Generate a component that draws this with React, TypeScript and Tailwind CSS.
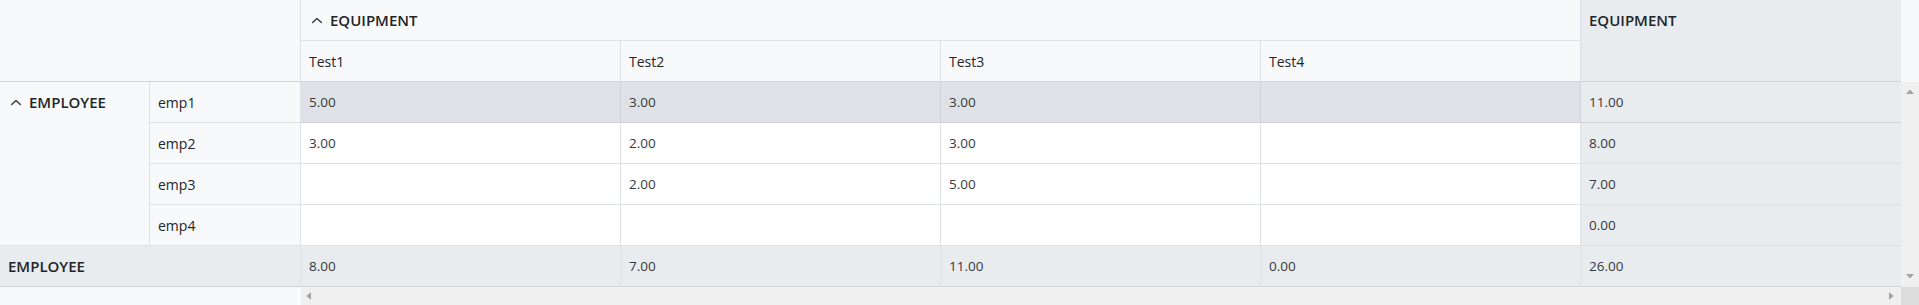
import React from "react";

const rows = [
  { name: "emp1", vals: ["5.00", "3.00", "3.00", ""], total: "11.00", hl: true },
  { name: "emp2", vals: ["3.00", "2.00", "3.00", ""], total: "8.00", hl: false },
  { name: "emp3", vals: ["", "2.00", "5.00", ""], total: "7.00", hl: false },
  { name: "emp4", vals: ["", "", "", ""], total: "0.00", hl: false },
];

const rowStart = ["row-start-3", "row-start-4", "row-start-5", "row-start-6"];
const colStart = ["col-start-3", "col-start-4", "col-start-5", "col-start-6"];

function Chevron() {
  return (
    <svg width="16" height="16" viewBox="0 0 16 16" className="shrink-0">
      <path d="M3.6 10.6 L8 6.4 L12.4 10.6" fill="none" stroke="#343a40" strokeWidth="1.4" strokeLinecap="round" strokeLinejoin="round" />
    </svg>
  );
}

function Tri({ dir }: { dir: "up" | "down" | "left" | "right" }) {
  if (dir === "up")
    return (
      <svg width="8" height="5" viewBox="0 0 8 5"><path d="M0 5 L4 0.5 L8 5Z" fill="#a3a3a3" /></svg>
    );
  if (dir === "down")
    return (
      <svg width="8" height="5" viewBox="0 0 8 5"><path d="M0 0 L4 4.5 L8 0Z" fill="#a3a3a3" /></svg>
    );
  if (dir === "left")
    return (
      <svg width="5" height="8" viewBox="0 0 5 8"><path d="M5 0 L0.5 4 L5 8Z" fill="#a3a3a3" /></svg>
    );
  return (
    <svg width="5" height="8" viewBox="0 0 5 8"><path d="M0 0 L4.5 4 L0 8Z" fill="#a3a3a3" /></svg>
  );
}

export default function App() {
  return (
    <div className="w-[1919px] h-[305px] overflow-hidden bg-white text-[#212529] font-['Open_Sans',sans-serif] text-[14px]">
      <div className="grid grid-cols-[150px_151px_320px_320px_320px_320px_320px_18px] grid-rows-[41px_41px_41px_41px_41px_41px_41px_18px]">
        {/* header corner */}
        <div className="col-start-1 col-span-2 row-start-1 row-span-2 bg-[#f8f9fa] border-r border-b border-r-[#dee2e6] border-b-[#ced4da]" />
        {/* column group header */}
        <div className="col-start-3 col-span-4 row-start-1 bg-[#f8f9fa] border-r border-b border-[#dee2e6] flex items-center pl-2">
          <Chevron />
          <span className="ml-[5px] font-semibold text-[15px]">EQUIPMENT</span>
        </div>
        {/* grand total header */}
        <div className="col-start-7 row-start-1 row-span-2 bg-[#e9ecef] border-b border-[#ced4da]">
          <div className="h-10 flex items-center pl-2 font-semibold text-[15px]">EQUIPMENT</div>
        </div>
        <div className="col-start-8 row-start-1 row-span-2 bg-[#f8f9fa]" />
        {["Test1", "Test2", "Test3", "Test4"].map((t, i) => (
          <div
            key={t}
            className={`${colStart[i]} row-start-2 bg-[#f8f9fa] border-r border-b border-r-[#dee2e6] border-b-[#ced4da] flex items-center pl-2`}
          >
            {t}
          </div>
        ))}

        {/* row group header */}
        <div className="col-start-1 row-start-3 row-span-4 bg-[#f8f9fa] border-r border-b border-[#dee2e6]">
          <div className="h-10 flex items-center pl-2">
            <Chevron />
            <span className="ml-[5px] font-semibold text-[15px]">EMPLOYEE</span>
          </div>
        </div>

        {rows.map((r, ri) => (
          <React.Fragment key={r.name}>
            <div className={`col-start-2 ${rowStart[ri]} bg-[#f8f9fa] border-r border-b border-[#dee2e6] flex items-center pl-2`}>
              {r.name}
            </div>
            {r.vals.map((v, ci) => (
              <div
                key={ci}
                className={`${colStart[ci]} ${rowStart[ri]} ${
                  r.hl ? "bg-[#dee2e6] border-r-[#ced4da] border-b-[#ced4da]" : "bg-white border-[#dee2e6]"
                } border-r border-b flex items-center pl-2 text-[13.5px] text-[#343a40]`}
              >
                {v}
              </div>
            ))}
            <div className={`col-start-7 ${rowStart[ri]} bg-[#e9ecef] border-b ${r.hl ? "border-[#ced4da]" : "border-[#dee2e6]"} flex items-center pl-2 text-[13.5px] text-[#343a40]`}>
              {r.total}
            </div>
          </React.Fragment>
        ))}

        {/* grand total row */}
        <div className="col-start-1 col-span-2 row-start-7 bg-[#e9ecef] border-r border-b border-r-[#dee2e6] border-b-[#ced4da] flex items-center pl-2 font-semibold text-[15px]">
          EMPLOYEE
        </div>
        {["8.00", "7.00", "11.00", "0.00"].map((v, i) => (
          <div
            key={i}
            className={`${colStart[i]} row-start-7 bg-[#e9ecef] border-r border-b border-r-[#dee2e6] border-b-[#ced4da] flex items-center pl-2 text-[13.5px] text-[#343a40]`}
          >
            {v}
          </div>
        ))}
        <div className="col-start-7 row-start-7 bg-[#e9ecef] border-b border-[#ced4da] flex items-center pl-2 text-[13.5px] text-[#343a40]">
          26.00
        </div>

        {/* vertical scrollbar */}
        <div className="col-start-8 row-start-3 row-span-5 bg-[#f0f0f0] flex flex-col items-center justify-between pt-[7px] pb-[8px]">
          <Tri dir="up" />
          <Tri dir="down" />
        </div>

        {/* bottom row */}
        <div className="col-start-1 col-span-2 row-start-8 bg-[#f8f9fa]" />
        <div className="col-start-3 col-span-5 row-start-8 bg-[#f0f0f0] flex items-center justify-between pl-[5px] pr-[7px]">
          <Tri dir="left" />
          <Tri dir="right" />
        </div>
        <div className="col-start-8 row-start-8 bg-[#dcdcdc]" />
      </div>
    </div>
  );
}
